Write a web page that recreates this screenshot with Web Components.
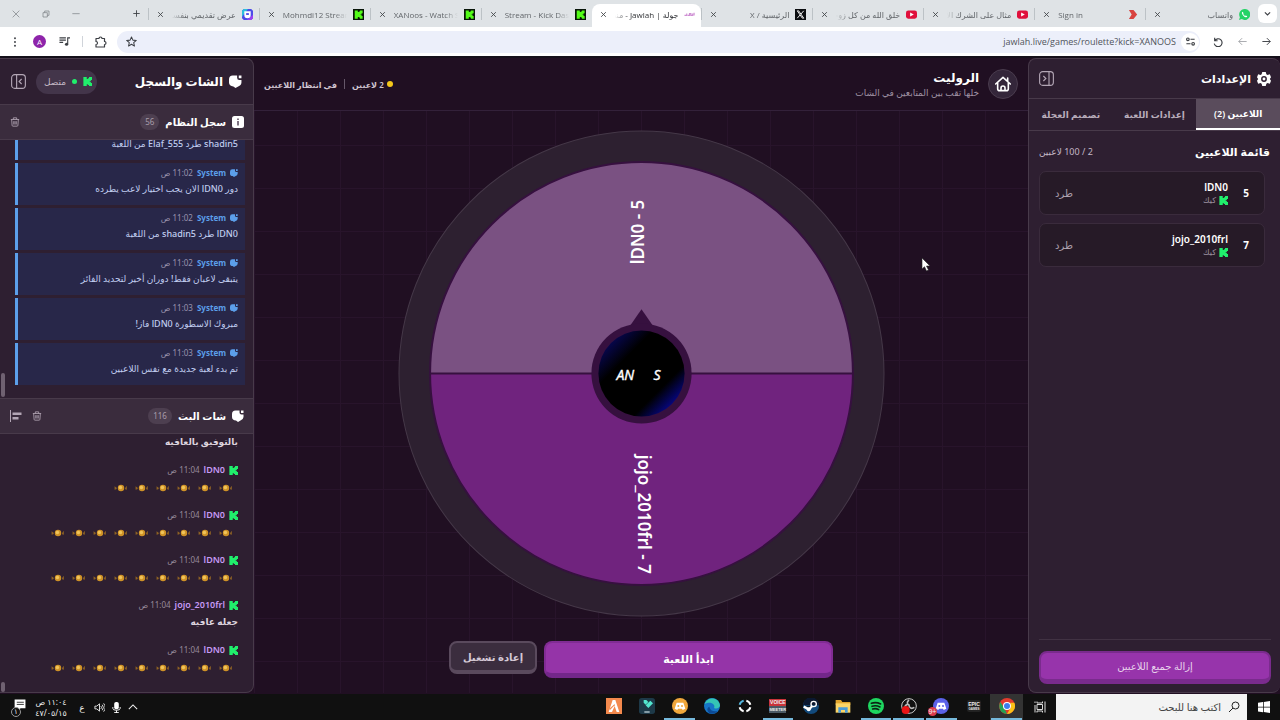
<!DOCTYPE html>
<html lang="ar" dir="rtl">
<head>
<meta charset="utf-8">
<title>جولة | Jawlah - الروليت</title>
<style>
  html { height: 100%; }
  body {
    margin: 0; height: 100%; overflow: hidden;
    display: flex; flex-direction: column;
    font-family: "Noto Sans", "DejaVu Sans", sans-serif;
    background: #200f22; color: #fff;
    --panel: #2e1f31; --line: #483a4a; --muted: #b3a6b5; --kick: #20ef6c; --accent: #9534a8;
  }
  jawlah-app { flex: 1; min-height: 0; }
</style>
</head>
<body>
<browser-chrome url="jawlah.live/games/roulette?kick=XANOOS">
  <browser-tab icon="whatsapp">واتساب</browser-tab>
  <browser-tab icon="signin">Sign in</browser-tab>
  <browser-tab icon="youtube">مثال على الشرك الأصغر</browser-tab>
  <browser-tab icon="youtube">خلق الله من كل زوجين</browser-tab>
  <browser-tab icon="xcom" text-dir="rtl">الرئيسية / X</browser-tab>
  <browser-tab icon="jawlah" active>جولة | Jawlah - منصة</browser-tab>
  <browser-tab icon="kickbox">Stream - Kick Dashboard</browser-tab>
  <browser-tab icon="kickbox">XANoos - Watch Stream</browser-tab>
  <browser-tab icon="kickbox">Mohmdi12 Stream - Kick</browser-tab>
  <browser-tab icon="slides">عرض تقديمي بنفسجي</browser-tab>
</browser-chrome>

<jawlah-app>
  <settings-panel slot="start">
    <player-row number="5" name="lDN0"></player-row>
    <player-row number="7" name="jojo_2010frl"></player-row>
  </settings-panel>
  <game-stage></game-stage>
  <chat-panel slot="end">
    <system-message slot="log">shadin5 طرد Elaf_555 من اللعبة</system-message>
    <system-message slot="log" time="11:02 ص">دور lDN0 الان يجب اختيار لاعب يطرده</system-message>
    <system-message slot="log" time="11:02 ص">lDN0 طرد shadin5 من اللعبة</system-message>
    <system-message slot="log" time="11:02 ص">يتبقى لاعبان فقط! دوران أخير لتحديد الفائز</system-message>
    <system-message slot="log" time="11:03 ص">مبروك الاسطورة lDN0 فاز!</system-message>
    <system-message slot="log" time="11:03 ص">تم بدء لعبة جديدة مع نفس اللاعبين</system-message>
    <chat-message slot="chat">بالتوفيق بالعافيه</chat-message>
    <chat-message slot="chat" name="lDN0" time="11:04 ص" candies="6"></chat-message>
    <chat-message slot="chat" name="lDN0" time="11:04 ص" candies="9"></chat-message>
    <chat-message slot="chat" name="lDN0" time="11:04 ص" candies="9"></chat-message>
    <chat-message slot="chat" name="jojo_2010frl" time="11:04 ص">جعله عافيه</chat-message>
    <chat-message slot="chat" name="lDN0" time="11:04 ص" candies="9"></chat-message>
  </chat-panel>
</jawlah-app>

<task-bar></task-bar>
<mouse-pointer></mouse-pointer>

<script>
const KICK = 'M1 0h9v5h3V3h3V0h8v8h-3v3h-3v2h3v3h3v8h-8v-3h-3v-2h-3v5H1z';
const CHAT = 'M7 1h8v4q0 4 4 4h4v5a8 8 0 0 1-6 7l-5 3-4-3c-5 0-8-3-8-7V8a7 7 0 0 1 7-7zM18 1h5v5h-5z';

// every glyph sits on a 24x24 grid
const ICONS = {
  kick: `<path fill="#20ef6c" d="${KICK}"/>`,
  kickbox: `<path fill="#081508" d="M0 0h24v24H0z"/><g transform="translate(3 3) scale(.75)"><path fill="#53fc18" d="${KICK}"/></g>`,
  whatsapp: '<path fill="#25d366" d="M12 0a12 12 0 1 1-6 22l-6 2 2-6A12 12 0 0 1 12 0z"/><path fill="#fff" d="M8 6c-3 1-2 5 2 9s8 4 8 1l-3-2-2 1-4-4 1-2z"/>',
  signin: '<path fill="#d8433f" d="M2 2h10l8 10-8 10H2l6-10z"/>',
  youtube: '<rect y="3" width="24" height="18" rx="5" fill="#e0103c"/><path fill="#fff" d="M9 7.500l8 4.500-8 4.500z"/>',
  xcom: '<path fill="#0b0d10" d="M0 0h24v24H0z"/><path fill="none" stroke="#fff" stroke-width="2" d="M5 4h3l11 16h-3zM19 4l-6 7M11 13l-6 7"/>',
  jawlah: '<path fill="none" stroke="#cf8fd4" stroke-width="2.500" d="M1 14h5v-4M8 14h4v-4h3v4h4v-4M22 8v6"/>',
  slides: '<path fill="#4c4be8" d="M4 0h16l4 4v16l-4 4H4l-4-4V4z"/><path fill="#2cc0dd" d="M0 4l4-4h9L2 14l-2 4z"/><path fill="#9c3ff0" d="M24 20l-4 4h-9l10-9 3-2z"/><path fill="#fff" d="M5 5h14v8a7 7 0 0 1-14 0z"/><path fill="#4c4be8" d="M9 9h6v4H9z"/>',
  close: '<path fill="none" stroke="currentColor" stroke-width="3" d="M4 4l16 16M20 4L4 20"/>',
  winclose: '<path fill="none" stroke="currentColor" stroke-width="2" d="M2 2l20 20M22 2L2 22"/>',
  restore: '<path fill="none" stroke="currentColor" stroke-width="2" d="M3 8h13v13H3zM8 8V3h13v13h-5"/>',
  minimise: '<path fill="none" stroke="currentColor" stroke-width="2" d="M1 11h22"/>',
  plus: '<path fill="none" stroke="currentColor" stroke-width="3" d="M12 1v22M1 12h22"/>',
  down: '<path fill="none" stroke="currentColor" stroke-width="4" d="M3 8l9 9 9-9"/>',
  up: '<path fill="none" stroke="currentColor" stroke-width="2.500" d="M2 17l10-10 10 10"/>',
  forward: '<path fill="none" stroke="currentColor" stroke-width="2.500" d="M1 12h21M13 3l9 9-9 9"/>',
  back: '<path fill="none" stroke="currentColor" stroke-width="2.500" d="M23 12H2M11 3l-9 9 9 9"/>',
  reload: '<path fill="none" stroke="currentColor" stroke-width="2.800" d="M4 2v7h7M4 9a9.500 9.500 0 1 1-1 7"/>',
  tune: '<g fill="none" stroke="currentColor" stroke-width="3"><circle cx="5" cy="6" r="3.500"/><path d="M12 6h11M1 18h11"/><circle cx="19" cy="18" r="3.500"/></g>',
  star: '<path fill="none" stroke="currentColor" stroke-width="2.200" stroke-linejoin="round" d="M12 2l3 7 7.500.7-5.700 5 1.700 7.300-6.500-4-6.500 4 1.700-7.300-5.700-5L9 9z"/>',
  puzzle: '<path fill="none" stroke="currentColor" stroke-width="2.400" stroke-linejoin="round" d="M2 5h6a3 3 0 0 1 6 0h5v6a3 3 0 0 1 0 6v5H2v-5c4 0 4-6 0-6z"/>',
  music: '<path fill="none" stroke="currentColor" stroke-width="2.400" d="M1 4h14M1 9h14M1 14h8M19 18V4h5"/><circle cx="16.500" cy="18" r="3.500" fill="currentColor"/>',
  dots: '<g fill="currentColor"><circle cx="12" cy="3" r="2.300"/><circle cx="12" cy="12" r="2.300"/><circle cx="12" cy="21" r="2.300"/></g>',
  gear: '<path fill="currentColor" fill-rule="evenodd" d="M9 0h6l1 4 2 1 4-1 2 5-2 3 2 3-2 5-4-1-2 1-1 4H9l-1-4-2-1-4 1-2-5 2-3-2-3 2-5 4 1 2-1zM12 7a5 5 0 1 0 0 10 5 5 0 0 0 0-10z"/><circle cx="12" cy="12" r="2.500" fill="currentColor"/>',
  panelright: '<g fill="none" stroke="currentColor" stroke-width="1.800"><rect x="1" y="1" width="22" height="22" rx="5"/><path d="M16 1v22M7 8l4 4-4 4"/></g>',
  panelleft: '<g fill="none" stroke="currentColor" stroke-width="1.800"><rect x="1" y="1" width="22" height="22" rx="5"/><path d="M9 1v22M17 8l-4 4 4 4"/></g>',
  home: '<g fill="none" stroke="currentColor" stroke-width="2.400" stroke-linejoin="round" stroke-linecap="round"><path d="M1 12L12 2l11 10M4 10v9q0 3 3 3h10q3 0 3-3v-9M19 8V3"/><path d="M9 21v-3a3 3 0 0 1 6 0v3"/></g>',
  chat: `<path fill="currentColor" d="${CHAT}"/>`,
  info: '<rect width="24" height="24" rx="5" fill="currentColor"/><path stroke="#55465a" stroke-width="3" d="M12 10v9M12 5v3"/>',
  trash: '<path fill="none" stroke="currentColor" stroke-width="2" d="M2 6h20M8 6V2h8v4M4 6l1 14q0 2 2 2h10q2 0 2-2l1-14M9 10v8M12 10v8M15 10v8"/>',
  align: '<path fill="currentColor" d="M0 0h2v24H0zM5 5h18v5H5zM5 14h12v5H5z"/>',
  windows: '<path fill="#fff" d="M0 3.500l10-1.500v9.500H0zM11.500 1.800L24 0v11.500H11.500zM0 13h10v9.500L0 21zM11.500 13H24v11l-12.500-1.800z"/>',
  search: '<g fill="none" stroke="#222" stroke-width="2"><circle cx="15" cy="9" r="7"/><path d="M10 14L2 22"/></g>',
  taskview: '<g fill="none" stroke="#ddd" stroke-width="2"><path d="M6 7h11v10H6zM6 1v3h11V1M6 23v-3h11v3M22 1v22M2 1v3M2 8v15"/></g>',
  chrome: '<circle cx="12" cy="12" r="12" fill="#e33b2e"/><path fill="#23a455" d="M2 6l6 9 4 9A12 12 0 0 1 2 6z"/><path fill="#fbc116" d="M12 24l6-10-1-7h6a12 12 0 0 1-11 17z"/><circle cx="12" cy="12" r="6" fill="#fff"/><circle cx="12" cy="12" r="4.500" fill="#3b7ded"/>',
  discord: '<circle cx="12" cy="12" r="12" fill="#5b62e8"/><path fill="#fff" d="M7 7h10l3 9-4 2-1-2H9l-1 2-4-2z"/><circle cx="9.500" cy="12" r="1.500" fill="#5b62e8"/><circle cx="15" cy="12" r="1.500" fill="#5b62e8"/>',
  discordalt: '<circle cx="12" cy="12" r="12" fill="#f0a73c"/><path fill="#fff" d="M7 7h10l3 9-4 2-1-2H9l-1 2-4-2z"/><circle cx="9.500" cy="12" r="1.500" fill="#f0a73c"/><circle cx="15" cy="12" r="1.500" fill="#f0a73c"/>',
  obs: '<circle cx="12" cy="12" r="11" fill="#111" stroke="#ccc" stroke-width="1.500"/><path fill="none" stroke="#bbb" stroke-width="2.500" d="M12 3c-4 3-3 7 1 8M20 14c-4 3-8 1-8-3M6 16c-1-5 3-8 7-5"/><circle cx="7" cy="18" r="6" fill="#ea1414"/>',
  spotify: '<circle cx="12" cy="12" r="12" fill="#1ed760"/><path fill="none" stroke="#0c2414" stroke-width="2.400" stroke-linecap="round" d="M5 8q7-2.500 14 1M6 12.500q6-2 12 1M7 16.500q5-1.500 9 1"/>',
  folder: '<path fill="#e0a52e" d="M1 3h8l2 3h12v4H1z"/><path fill="#fbd568" d="M1 8h22v14H1z"/><path fill="#4a9bd8" d="M5 14h14v8h-4v-4H9v4H5z"/>',
  steam: '<circle cx="12" cy="12" r="12" fill="#124a7c"/><path fill="#0b1830" d="M0 11a12 12 0 0 1 24 0z"/><circle cx="16" cy="9" r="4" fill="none" stroke="#fff" stroke-width="2"/><path stroke="#fff" stroke-width="3.500" d="M1 13l8 4 5-5"/><circle cx="8.500" cy="17" r="3" fill="#fff"/>',
  ring: '<g fill="none" stroke-width="3"><path stroke="#fff" d="M14 4a8 8 0 0 1 6 6M20 14a8 8 0 0 1-6 6M10 20a8 8 0 0 1-6-6"/><path stroke="#55b8df" d="M4 10a8 8 0 0 1 6-6"/></g>',
  edge: '<circle cx="12" cy="12" r="12" fill="#1775c7"/><path fill="#35c6b5" d="M1 9C4-2 22-3 24 11c0 4-5 6-9 4 3-6-6-11-14-6z"/><path fill="#0c4a96" d="M8 13c1 6 7 8 13 6A12 12 0 0 1 8 23c-4-4-4-8 0-10z"/>',
  filmora: '<rect width="24" height="24" rx="4" fill="#1d3948"/><path fill="#53e6cf" d="M7 3h4l3 3-4 4-3-3zM13 8l4-4 4 4-7 7-4-4z"/><path stroke="#b9ced6" stroke-width="2" d="M8 21h8"/>',
  fivem: '<path fill="#f3894d" d="M0 0h24v24H0z"/><path fill="#fff" d="M10 3h4l6 18h-4l-3-9-4 9H4z"/><path fill="#f3894d" d="M5 16l8-7v2l-7 7z"/>',
  notify: '<path fill="#fff" d="M3 1h20v16h-9l-4 4v-4H3z"/><path stroke="#111" stroke-width="1.500" d="M7 6h13M7 10h13"/>',
  volume: '<path fill="none" stroke="#eee" stroke-width="2" d="M2 9h4l6-5v16l-6-5H2zM15 9q3 3 0 6M18 6q5 6 0 12M21 3q7 9 0 18"/>',
  mic: '<rect x="7" width="10" height="16" rx="4" fill="#fff"/><path fill="none" stroke="#fff" stroke-width="2" d="M4 11v3q0 4 8 4t8-4v-3M12 18v6M7 23h10"/>',
  candy: '<circle cx="12" cy="12" r="5.500" fill="#cf9227"/><circle cx="11" cy="11" r="3" fill="#f0c45a"/><path fill="#8f6224" d="M5 12L1 9v6l3-1zM19 12l3-4v7l-3-1z"/>',
};

function define(name, css, html) {
  customElements.define(name, class extends HTMLElement {
    connectedCallback() {
      if (this.shadowRoot) return;
      const root = this.attachShadow({ mode: 'open' });
      const markup = typeof html === 'function' ? html(this) : html;
      root.innerHTML = `<style>:host, * { box-sizing: border-box; } button { font: inherit; color: inherit; border: 0; background: none; padding: 0; cursor: pointer; } ${css}</style>${markup}`;
    }
  });
}

const icon = (name, size = 12) => `<ui-icon name="${name}" size="${size}"></ui-icon>`;

define('ui-icon', `
  :host { display: inline-flex; flex: none; }
  svg { display: block; }
`, el => {
  const size = el.getAttribute('size');
  return `<svg width="${size}" height="${size}" viewBox="0 0 24 24" aria-hidden="true">${ICONS[el.getAttribute('name')]}</svg>`;
});

/* ---------- browser ---------- */

define('browser-tab', `
  :host {
    flex: 1; min-width: 0; display: flex; align-items: center; gap: 6px;
    height: 23px; padding: 0 6px 3px; font-size: 8px; color: #62666a;
  }
  :host([active]) { background: #fff; color: #303236; border-radius: 8px 8px 0 0; }
  .title { flex: 1; min-width: 0; overflow: hidden; white-space: nowrap; }
  .title.rtl { -webkit-mask-image: linear-gradient(to left, #000 80%, transparent); }
  .title.ltr { -webkit-mask-image: linear-gradient(to right, #000 80%, transparent); }
  button { display: flex; padding: 2px; color: #404347; }
  :host(:not([active])) { border-inline-end: 1px solid transparent; border-image: linear-gradient(transparent 20%, #bcc2c6 20% 68%, transparent 68%) 1; }
`, el => {
  const dir = el.getAttribute('text-dir') || (/^[A-Za-z]/.test(el.textContent) ? 'ltr' : 'rtl');
  return `${icon(el.getAttribute('icon'), 11)}<span class="title ${dir}" dir="${dir}"><slot></slot></span>
    <button aria-label="إغلاق">${icon('close', 7)}</button>`;
});

define('browser-chrome', `
  :host { display: block; flex: none; background: #dfe3e6; color: #3c3f44; border-bottom: 2px solid #15101a; font-family: "Open Sans", "DejaVu Sans", sans-serif; }
  .strip { display: flex; align-items: flex-end; height: 27px; padding-inline-start: 3px; }
  .strip button, .bar button { display: flex; align-items: center; justify-content: center; }
  .menu { width: 19px; height: 19px; margin-bottom: 4px; margin-inline-end: 2px; background: #fff; border-radius: 6px; }
  .tabs { flex: 1; min-width: 0; display: flex; }
  .new { width: 24px; height: 27px; }
  .controls { display: flex; width: 124px; color: #74797d; padding-inline-start: 33px; }
  .controls button { width: 30px; height: 27px; }
  .bar { display: flex; align-items: center; height: 29px; background: #fff; padding: 0 2px 0 3px; }
  .bar > button { width: 24px; height: 24px; }
  .dim { color: #a5a8ac; }
  .field { flex: 1; display: flex; align-items: center; height: 22px; border-radius: 11px; background: #eceffa; padding: 0 1px 0 9px; margin: 0 6px 0 4px; }
  .site { width: 18px; height: 18px; background: #fff; border-radius: 50%; }
  input { flex: 1; min-width: 0; direction: ltr; text-align: right; font: inherit; font-size: 9px; color: #50545a; border: 0; background: none; padding: 0 5px; outline: 0; }
  i { width: 1px; height: 11px; background: #d0d4da; margin: 0 6px; }
  .bar .avatar { width: 13px; height: 13px; border-radius: 50%; background: #8e24aa; color: #fff; font-size: 8px; margin: 0 6px; }
`, el => `
  <div class="strip">
    <button class="menu" aria-label="بحث في علامات التبويب">${icon('down', 7)}</button>
    <div class="tabs"><slot></slot></div>
    <button class="new" aria-label="علامة تبويب جديدة">${icon('plus', 7)}</button>
    <div class="controls">
      <button aria-label="تصغير">${icon('minimise', 8)}</button>
      <button aria-label="استعادة">${icon('restore', 8)}</button>
      <button aria-label="إغلاق النافذة">${icon('winclose', 8)}</button>
    </div>
  </div>
  <div class="bar">
    <button aria-label="رجوع">${icon('forward', 9)}</button>
    <button class="dim" aria-label="تقدم">${icon('back', 9)}</button>
    <button aria-label="إعادة تحميل">${icon('reload', 10)}</button>
    <div class="field">
      <button class="site" aria-label="معلومات الموقع">${icon('tune', 9)}</button>
      <input aria-label="العنوان" value="${el.getAttribute('url')}">
      <button aria-label="إشارة مرجعية">${icon('star', 11)}</button>
    </div>
    <button aria-label="الإضافات">${icon('puzzle', 12)}</button>
    <i></i>
    <button aria-label="الوسائط">${icon('music', 11)}</button>
    <button class="avatar" aria-label="الملف الشخصي">A</button>
    <button aria-label="القائمة">${icon('dots', 10)}</button>
  </div>
`);

/* ---------- app shell ---------- */

define('jawlah-app', `
  :host { display: flex; overflow: hidden; padding-bottom: 1px; }
  ::slotted([slot=start]) { flex: 0 0 252px; }
  ::slotted(game-stage) { flex: 1; }
  ::slotted([slot=end]) { flex: 0 0 254px; }
  slot { display: contents; }
`, '<slot name="start"></slot><slot></slot><slot name="end"></slot>');

define('settings-panel', `
  :host { display: flex; flex-direction: column; min-width: 0; background: var(--panel); border: 1px solid var(--line); border-inline-start: 0; border-radius: 8px; }
  header { display: flex; align-items: center; gap: 6px; height: 40px; padding: 0 9px 0 10px; border-bottom: 1px solid var(--line); }
  h2 { flex: 1; margin: 0; font-size: 11px; font-weight: 700; }
  .toggle { display: flex; color: var(--muted); }
  nav { display: flex; height: 32px; border-bottom: 1px solid var(--line); font-size: 9px; font-weight: 600; color: #b9adbb; }
  nav button { flex: 1; white-space: nowrap; }
  nav .on { background: #5a4c5c; color: #fff; border-bottom: 2px solid #fff; }
  .head { display: flex; align-items: center; justify-content: space-between; height: 40px; padding: 0 10px; }
  h3 { margin: 0; font-size: 11px; font-weight: 700; }
  .count { font-size: 9px; color: #c4b8c6; }
  .list { flex: 1; display: flex; flex-direction: column; gap: 8px; padding-inline: 15px 10px; }
  footer { border-top: 1px solid #413243; margin: 0 9px 0 10px; padding: 11px 0 8px; display: flex; }
  footer button { flex: 1; height: 33px; border-radius: 8px; background: #9734ab; border: 2px solid #7a2b8d; border-bottom-width: 5px; color: #e8d3ec; font-size: 10px; }
`, `
  <header>${icon('gear', 14)}<h2>الإعدادات</h2><button class="toggle" aria-label="طي اللوحة">${icon('panelright', 15)}</button></header>
  <nav><button class="on">اللاعبين (2)</button><button>إعدادات اللعبة</button><button>تصميم العجلة</button></nav>
  <div class="head"><h3>قائمة اللاعبين</h3><span class="count">2 / 100 لاعبين</span></div>
  <div class="list"><slot></slot></div>
  <footer><button>إزالة جميع اللاعبين</button></footer>
`);

define('player-row', `
  :host { display: flex; align-items: center; height: 44px; padding: 0 15px; background: #261a27; border: 1px solid #3a2b3c; border-radius: 7px; }
  .number { font-size: 10px; font-weight: 700; width: 21px; }
  .who { flex: 1; display: flex; flex-direction: column; }
  b { font-size: 10px; line-height: 14px; font-weight: 600; }
  small { display: flex; align-items: center; gap: 3px; font-size: 8px; line-height: 12px; color: #9d919f; }
  button { font-size: 10px; color: #aca0ae; }
`, el => `
  <span class="number">${el.getAttribute('number')}</span>
  <div class="who"><b>${el.getAttribute('name')}</b><small>${icon('kick', 9)}كيك</small></div>
  <button>طرد</button>
`);

/* ---------- stage ---------- */

define('game-stage', `
  :host {
    display: flex; flex-direction: column; min-width: 0; background-color: #200f22;
    background-image: linear-gradient(#28142b 1px, transparent 1px), linear-gradient(90deg, #28142b 1px, transparent 1px);
    background-size: 43px 43px; background-position: 0 1px;
  }
  header { display: flex; align-items: center; gap: 9px; height: 53px; padding: 0 10px; background: #200f22; border-bottom: 1px solid #33213a; }
  .home { display: flex; align-items: center; justify-content: center; width: 30px; height: 30px; border-radius: 50%; background: #34263a; border: 1px solid #4a3c4e; }
  .title { flex: 1; }
  h1 { margin: 0; font-size: 12px; line-height: 17px; font-weight: 700; }
  p { margin: 0; font-size: 9px; line-height: 14px; color: #9f91a2; }
  .status { display: flex; align-items: center; gap: 3px; font-size: 8px; font-weight: 600; color: #cfc4d0; }
  .status i { width: 6px; height: 6px; border-radius: 50%; background: #f5c71a; }
  .status s { width: 1px; height: 10px; background: #66586a; margin: 0 4px; }
  .wheel { flex: 1; min-height: 0; display: flex; justify-content: center; padding: 19px 0 24px; }
  .actions { display: flex; align-items: flex-start; gap: 7px; width: 384px; max-width: 100%; margin: 0 auto 15px; }
  .actions button { border-radius: 8px; font-weight: 700; white-space: nowrap; }
  .actions .play { flex: 1; height: 37px; font-size: 11px; background: #9534a8; border: 2px solid #812c94; border-bottom: 5px solid #73278a; }
  .actions .again { width: 88px; height: 33px; font-size: 10px; background: #3b2d3e; border: 2px solid #5a4a5d; border-bottom: 4px solid #5a4a5d; color: #d4c9d6; }
`, `
  <header>
    <button class="home" aria-label="الرئيسية">${icon('home', 16)}</button>
    <div class="title"><h1>الروليت</h1><p>خلها تقب بين المتابعين في الشات</p></div>
    <div class="status"><i></i><span>2 لاعبين</span><s></s><span>في انتظار اللاعبين</span></div>
  </header>
  <div class="wheel"><roulette-wheel></roulette-wheel></div>
  <div class="actions"><button class="play">ابدأ اللعبة</button><button class="again">إعادة تشغيل</button></div>
`);

define('roulette-wheel', `
  :host { display: block; height: 100%; aspect-ratio: 1; }
  svg { display: block; width: 100%; height: 100%; direction: ltr; }
  text { fill: #fff; font-weight: 600; font-size: 17px; }
  .logo { font: italic 400 14px "Open Sans", sans-serif; stroke: #fff; stroke-width: .4; }
`, `
  <svg viewBox="0 0 486 486" role="img" aria-label="عجلة الروليت">
    <defs>
      <linearGradient id="rim" x1="0" y1="0" x2="1" y2="1">
        <stop offset=".1" stop-color="#08085e"/><stop offset=".32" stop-color="#000"/><stop offset=".7" stop-color="#000"/><stop offset=".9" stop-color="#0808a0"/>
      </linearGradient>
    </defs>
    <circle cx="243" cy="243" r="242" fill="#2d2030" stroke="#453848"/>
    <path fill="#7a5182" d="M32 243a211 211 0 0 1 422 0z"/>
    <path fill="#70237e" d="M32 243a211 211 0 0 0 422 0z"/>
    <circle cx="243" cy="243" r="211" fill="none" stroke="#36103f" stroke-width="2"/>
    <path stroke="#36103f" stroke-width="2" d="M32 243h422"/>
    <path fill="#36103f" d="M243 179l14 20h-28z"/>
    <circle cx="243" cy="243" r="50" fill="#36103f"/>
    <circle cx="243" cy="243" r="43" fill="url(#rim)"/>
    <text transform="translate(245 134) rotate(-90)">lDN0 - 5</text>
    <text transform="translate(240 324) rotate(90)">jojo_2010frl - 7</text>
    <text class="logo" x="218" y="249">AN</text>
    <text class="logo" x="255" y="249">S</text>
  </svg>
`);

/* ---------- chat ---------- */

// rows without a time are continuations: text only, aligned to the row's bottom
define('system-message', `
  :host { display: flex; flex-direction: column; justify-content: flex-end; flex: none; height: 42px; padding: 0 7px 8px; background: #282749; border-inline-end: 3px solid #5c9fea; }
  .meta { display: flex; align-items: center; gap: 4px; font-size: 8px; line-height: 13px; color: #9a93ae; }
  .meta ui-icon, b { color: #5c9fea; }
  p { margin: 2px 0 0; font-size: 9px; line-height: 16px; color: #c0cdf0; white-space: nowrap; font-weight: 500; }
`, el => {
  const time = el.getAttribute('time');
  const meta = time ? `<div class="meta">${icon('chat', 8)}<b>System</b><span>${time}</span></div>` : '';
  return `${meta}<p><slot></slot></p>`;
});

define('chat-message', `
  :host { display: flex; flex-direction: column; justify-content: flex-end; flex: none; height: 45px; padding: 0 7px 8px; }
  .meta { display: flex; align-items: center; gap: 4px; font-size: 8px; line-height: 14px; color: #988b9b; }
  b { color: #c79af5; font-size: 9px; font-weight: 600; }
  p { margin: 2px 0 0; font-size: 9px; line-height: 16px; color: #ddd3de; font-weight: 600; }
  .candies { display: flex; align-items: center; gap: 7px; height: 16px; margin-top: 2px; padding: 2px 5px 0; }
`, el => {
  const name = el.getAttribute('name');
  const candies = Number(el.getAttribute('candies') || 0);
  const meta = name ? `<div class="meta">${icon('kick', 9)}<b>${name}</b><span>${el.getAttribute('time')}</span></div>` : '';
  const body = candies ? `<div class="candies">${icon('candy', 14).repeat(candies)}</div>` : '<p><slot></slot></p>';
  return meta + body;
});

define('chat-panel', `
  :host { display: flex; flex-direction: column; min-width: 0; background: var(--panel); border: 1px solid var(--line); border-inline-end: 0; border-start-start-radius: 8px; border-end-start-radius: 8px; }
  header { display: flex; align-items: center; gap: 6px; flex: none; height: 45px; padding: 0 11px; }
  h2, h3 { margin: 0; font-weight: 700; }
  h2 { flex: 1; font-size: 12px; }
  h3 { font-size: 10px; }
  .live { display: flex; align-items: center; gap: 6px; height: 24px; padding: 0 5px 0 8px; margin-inline-end: 4px; border-radius: 12px; background: #43354a; font-size: 9px; color: #c3b8c5; }
  .live i { width: 5px; height: 5px; border-radius: 50%; background: var(--kick); }
  button { display: flex; color: var(--muted); }
  .bar { display: flex; align-items: center; gap: 6px; flex: none; height: 36px; padding: 0 9px 0 10px; background: #3a2c3d; border: solid var(--line); border-width: 1px 0; }
  .bar span { height: 16px; min-width: 18px; padding: 0 5px; border-radius: 8px; background: #4d3f50; font-size: 8px; line-height: 16px; color: #a89caa; margin-inline-end: auto; }
  .bar button + button { margin-inline-start: 4px; }
  .scroll { position: relative; overflow: hidden; display: flex; flex-direction: column; justify-content: flex-end; padding-inline: 8px 15px; min-height: 0; }
  .log { flex: 0 1 258px; gap: 3px; padding-bottom: 13px; }
  .chat { flex: 1; padding-bottom: 9px; }
  .thumb { position: absolute; left: 1px; bottom: 1px; width: 4px; height: 24px; border-radius: 2px; background: #6f6171; }
  .chat .thumb { height: 10px; bottom: 0; }
`, `
  <header>${icon('chat', 13)}<h2>الشات والسجل</h2><span class="live">${icon('kick', 9)}<i></i>متصل</span><button aria-label="طي اللوحة">${icon('panelleft', 15)}</button></header>
  <div class="bar">${icon('info', 12)}<h3>سجل النظام</h3><span>56</span><button aria-label="مسح السجل">${icon('trash', 10)}</button></div>
  <div class="scroll log"><slot name="log"></slot><div class="thumb"></div></div>
  <div class="bar">${icon('chat', 12)}<h3>شات البث</h3><span>116</span><button aria-label="مسح الشات">${icon('trash', 10)}</button><button aria-label="محاذاة">${icon('align', 12)}</button></div>
  <div class="scroll chat"><slot name="chat"></slot><div class="thumb"></div></div>
`);

/* ---------- desktop ---------- */

const APPS = [
  ['chrome', 'open front'], ['epic', ''], ['discord', 'open'], ['obs', 'open'], ['spotify', 'open'],
  ['folder', ''], ['steam', ''], ['voice', 'open'], ['ring', ''], ['edge', ''],
  ['discordalt', 'open'], ['filmora', ''], ['fivem', ''],
];
const LABELS = {
  epic: '<span class="epic">EPIC<small>GAMES</small></span>',
  voice: '<span class="voice"><b>VOICE</b><b>MEETER</b></span>',
  discord: `${icon('discord', 16)}<span class="badge">9+</span>`,
};

define('task-bar', `
  :host { display: flex; flex: none; height: 26px; background: #101010; color: #eee; }
  button { display: flex; align-items: center; justify-content: center; }
  .start { width: 33px; }
  .search { display: flex; align-items: center; gap: 7px; flex: 0 0 191px; padding: 0 7px; background: #f3f3f3; }
  .search input { flex: 1; min-width: 0; border: 0; padding: 0; background: none; outline: 0; font: inherit; font-size: 10px; }
  .search input::placeholder { color: #444; opacity: 1; }
  .view { width: 33px; }
  .apps { display: flex; flex: 0 0 425px; }
  .apps button { flex: 1; position: relative; border-bottom: 2px solid transparent; }
  .apps .open { border-image: linear-gradient(90deg, transparent 8%, #76b9dc 8% 92%, transparent 92%) 2; }
  .apps .front { background: #333; }
  .epic { font: 700 5px/6px "Liberation Sans", sans-serif; background: #222; padding: 1px; border-radius: 2px; }
  .epic small { display: block; font-size: 3px; line-height: 4px; }
  .voice b { display: block; width: 17px; font: 700 5px/7px "Liberation Sans", sans-serif; background: #c9343a; }
  .voice b + b { background: #4b5963; font-size: 4px; }
  .badge { position: absolute; left: 3px; bottom: 2px; width: 9px; height: 9px; border-radius: 50%; background: #dc3c4c; font: 7px/9px "Liberation Sans", sans-serif; direction: ltr; }
  .tray { display: flex; align-items: center; margin-inline-start: auto; padding-inline-end: 13px; gap: 6px; font-size: 9px; }
  .lang { width: 12px; text-align: center; }
  .clock { min-width: 38px; text-align: center; font-size: 8px; line-height: 11px; }
  .note { position: relative; }
  .note span { position: absolute; left: -2px; bottom: -2px; width: 10px; height: 10px; border: 1px solid #999; border-radius: 50%; background: #101010; font-size: 7px; line-height: 8px; text-align: center; }
`, `
  <button class="start" aria-label="ابدأ">${icon('windows', 12)}</button>
  <label class="search">${icon('search', 12)}<input aria-label="بحث" placeholder="اكتب هنا للبحث"></label>
  <button class="view" aria-label="عرض المهام">${icon('taskview', 12)}</button>
  <div class="apps">${APPS.map(([name, cls]) => `<button class="${cls}" aria-label="${name}">${LABELS[name] || icon(name, 16)}</button>`).join('')}</div>
  <div class="tray">
    ${icon('up', 10)}${icon('mic', 11)}${icon('volume', 11)}<span class="lang">ع</span>
    <div class="clock">١١:٠٤ ص<br>٤٧/٠٥/١٥</div>
    <div class="note">${icon('notify', 13)}<span>١</span></div>
  </div>
`);

define('mouse-pointer', `
  :host { position: absolute; left: 921px; top: 257px; pointer-events: none; }
  svg { display: block; }
`, '<svg width="10" height="15" viewBox="0 0 10 15"><path fill="#fff" stroke="#222" stroke-width=".6" d="M1 1v11l2.500-2.300L5.500 14l2-1-2-4H9z"/></svg>');
</script>
</body>
</html>
